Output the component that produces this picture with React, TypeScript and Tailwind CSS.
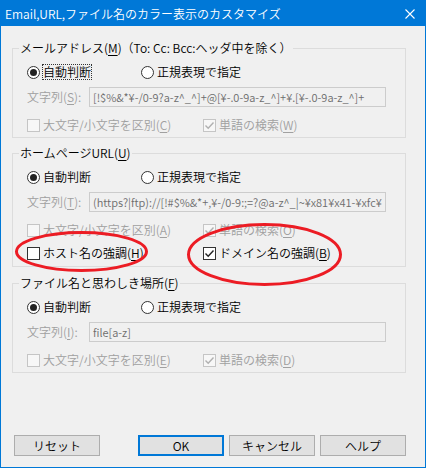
import React from 'react';

const U = ({ c }: { c: string }) => <span className="underline underline-offset-[2px]">{c}</span>;

function Radio({ checked, label, focus }: { checked?: boolean; label: string; focus?: boolean }) {
  return (
    <div className="flex items-center">
      <span className="flex h-[13px] w-[13px] shrink-0 items-center justify-center rounded-full border border-[#333333] bg-white">
        {checked && <span className="h-[7px] w-[7px] rounded-full bg-[#222222]" />}
      </span>
      <span className={focus ? 'ml-[3px] leading-[14px] outline outline-1 outline-dotted outline-[#333333]' : 'ml-[3px] leading-[14px]'}>
        {label}
      </span>
    </div>
  );
}

function Check({ checked, disabled, children }: { checked?: boolean; disabled?: boolean; children: React.ReactNode }) {
  return (
    <div className={disabled ? 'flex items-center text-[#a0a0a0]' : 'flex items-center text-black'}>
      <span
        className={
          disabled
            ? 'flex h-[13px] w-[13px] shrink-0 items-center justify-center border border-[#c5c5c5] bg-[#f7f7f7]'
            : 'flex h-[13px] w-[13px] shrink-0 items-center justify-center border border-[#333333] bg-white'
        }
      >
        {checked && (
          <svg width="11" height="11" viewBox="0 0 11 11">
            <polyline
              points="1.5,5.5 4.2,8.2 9.5,2.5"
              fill="none"
              stroke={disabled ? '#b0b0b0' : '#222222'}
              strokeWidth="1.4"
            />
          </svg>
        )}
      </span>
      <span className="ml-[3px] leading-[14px]">{children}</span>
    </div>
  );
}

function Group({
  title,
  fieldLabel,
  fieldValue,
  caseKey,
  wordKey,
  className,
  extra,
}: {
  title: React.ReactNode;
  fieldLabel: string;
  fieldValue: string;
  caseKey: string;
  wordKey: string;
  className: string;
  extra?: React.ReactNode;
}) {
  return (
    <fieldset className={`ml-[11px] w-[394px] border border-[#dcdcdc] px-[6px] ${className}`}>
      <legend className="px-[1px] leading-[16px]">{title}</legend>
      <div className="pl-[8px]">
        <div className="mt-[6px] flex h-[20px] items-center">
          <div className="w-[114px] shrink-0">
            <Radio checked label="自動判断" focus={fieldLabel === 'S'} />
          </div>
          <Radio label="正規表現で指定" />
        </div>
        <div className="mt-[5px] flex h-[20px] items-center">
          <div className="w-[62px] shrink-0 text-[#a0a0a0]">
            文字列(<U c={fieldLabel} />):
          </div>
          <div className="flex h-[20px] w-[297px] items-center overflow-hidden whitespace-nowrap border border-[#cccccc] bg-[#f0f0f0] pl-[3px] text-[11px] text-[#6d6d6d]">
            {fieldValue}
          </div>
        </div>
        <div className="mt-[8px] flex h-[20px] items-center">
          <div className="w-[176px] shrink-0">
            <Check disabled>
              大文字/小文字を区別(<U c={caseKey} />)
            </Check>
          </div>
          <Check disabled checked>
            単語の検索(<U c={wordKey} />)
          </Check>
        </div>
        {extra}
      </div>
    </fieldset>
  );
}

export default function App() {
  return (
    <div className="relative flex h-[468px] w-[426px] flex-col border border-[#0078d7] bg-[#f0f0f0] font-['Noto_Sans_CJK_JP','Noto_Sans',sans-serif] text-[12px] font-[350] text-black">
      {/* Title bar */}
      <div className="flex h-[25px] shrink-0 items-center justify-between bg-[#0078d7] pl-[4px] pr-[10px] text-white">
        <span className="leading-[16px]">Email,URL,ファイル名のカラー表示のカスタマイズ</span>
        <svg width="10" height="10" viewBox="0 0 10 10">
          <path d="M0.5 0.5 L9.5 9.5 M9.5 0.5 L0.5 9.5" stroke="white" strokeWidth="1.1" />
        </svg>
      </div>

      <Group
        className="mt-[14px] pb-[2px]"
        title={
          <>
            メールアドレス(<U c="M" />)（To: Cc: Bcc:ヘッダ中を除く）
          </>
        }
        fieldLabel="S"
        fieldValue="[!$%&*¥-/0-9?a-z^_^]+@[¥-.0-9a-z_^]+¥.[¥-.0-9a-z_^]+"
        caseKey="C"
        wordKey="W"
      />

      <Group
        className="mt-[7px] pb-[3px]"
        title={
          <>
            ホームページURL(<U c="U" />)
          </>
        }
        fieldLabel="T"
        fieldValue="(https?|ftp)://[!#$%&*+,¥-/0-9:;=?@a-z^_|~¥x81¥x41-¥xfc¥"
        caseKey="A"
        wordKey="O"
        extra={
          <div className="mt-[3px] flex h-[20px] items-center">
            <div className="w-[176px] shrink-0">
              <Check>
                ホスト名の強調(<U c="H" />)
              </Check>
            </div>
            <Check checked>
              ドメイン名の強調(<U c="B" />)
            </Check>
          </div>
        }
      />

      <Group
        className="mt-[8px] pb-[2px]"
        title={
          <>
            ファイル名と思わしき場所(<U c="F" />)
          </>
        }
        fieldLabel="I"
        fieldValue="file[a-z]"
        caseKey="E"
        wordKey="D"
      />

      {/* Buttons */}
      <div className="mt-[62px] flex h-[21px] pl-[13px]">
        <button className="h-[21px] w-[86px] border border-[#adadad] bg-[#e1e1e1] leading-[14px]">リセット</button>
        <div className="ml-auto mr-[19px] flex gap-[5px]">
          <button className="h-[21px] w-[86px] border-2 border-[#0078d7] bg-[#e1e1e1] leading-[14px]">OK</button>
          <button className="h-[21px] w-[86px] border border-[#adadad] bg-[#e1e1e1] leading-[14px]">キャンセル</button>
          <button className="h-[21px] w-[86px] border border-[#adadad] bg-[#e1e1e1] leading-[14px]">ヘルプ</button>
        </div>
      </div>

      {/* Red annotation marks */}
      <svg className="pointer-events-none absolute left-[-1px] top-[-1px]" width="426" height="468">
        <ellipse cx="81.5" cy="251.5" rx="65" ry="19" fill="none" stroke="#ec1c24" strokeWidth="3" />
        <ellipse cx="264.5" cy="254.5" rx="76" ry="30" fill="none" stroke="#ec1c24" strokeWidth="3" />
      </svg>
    </div>
  );
}
